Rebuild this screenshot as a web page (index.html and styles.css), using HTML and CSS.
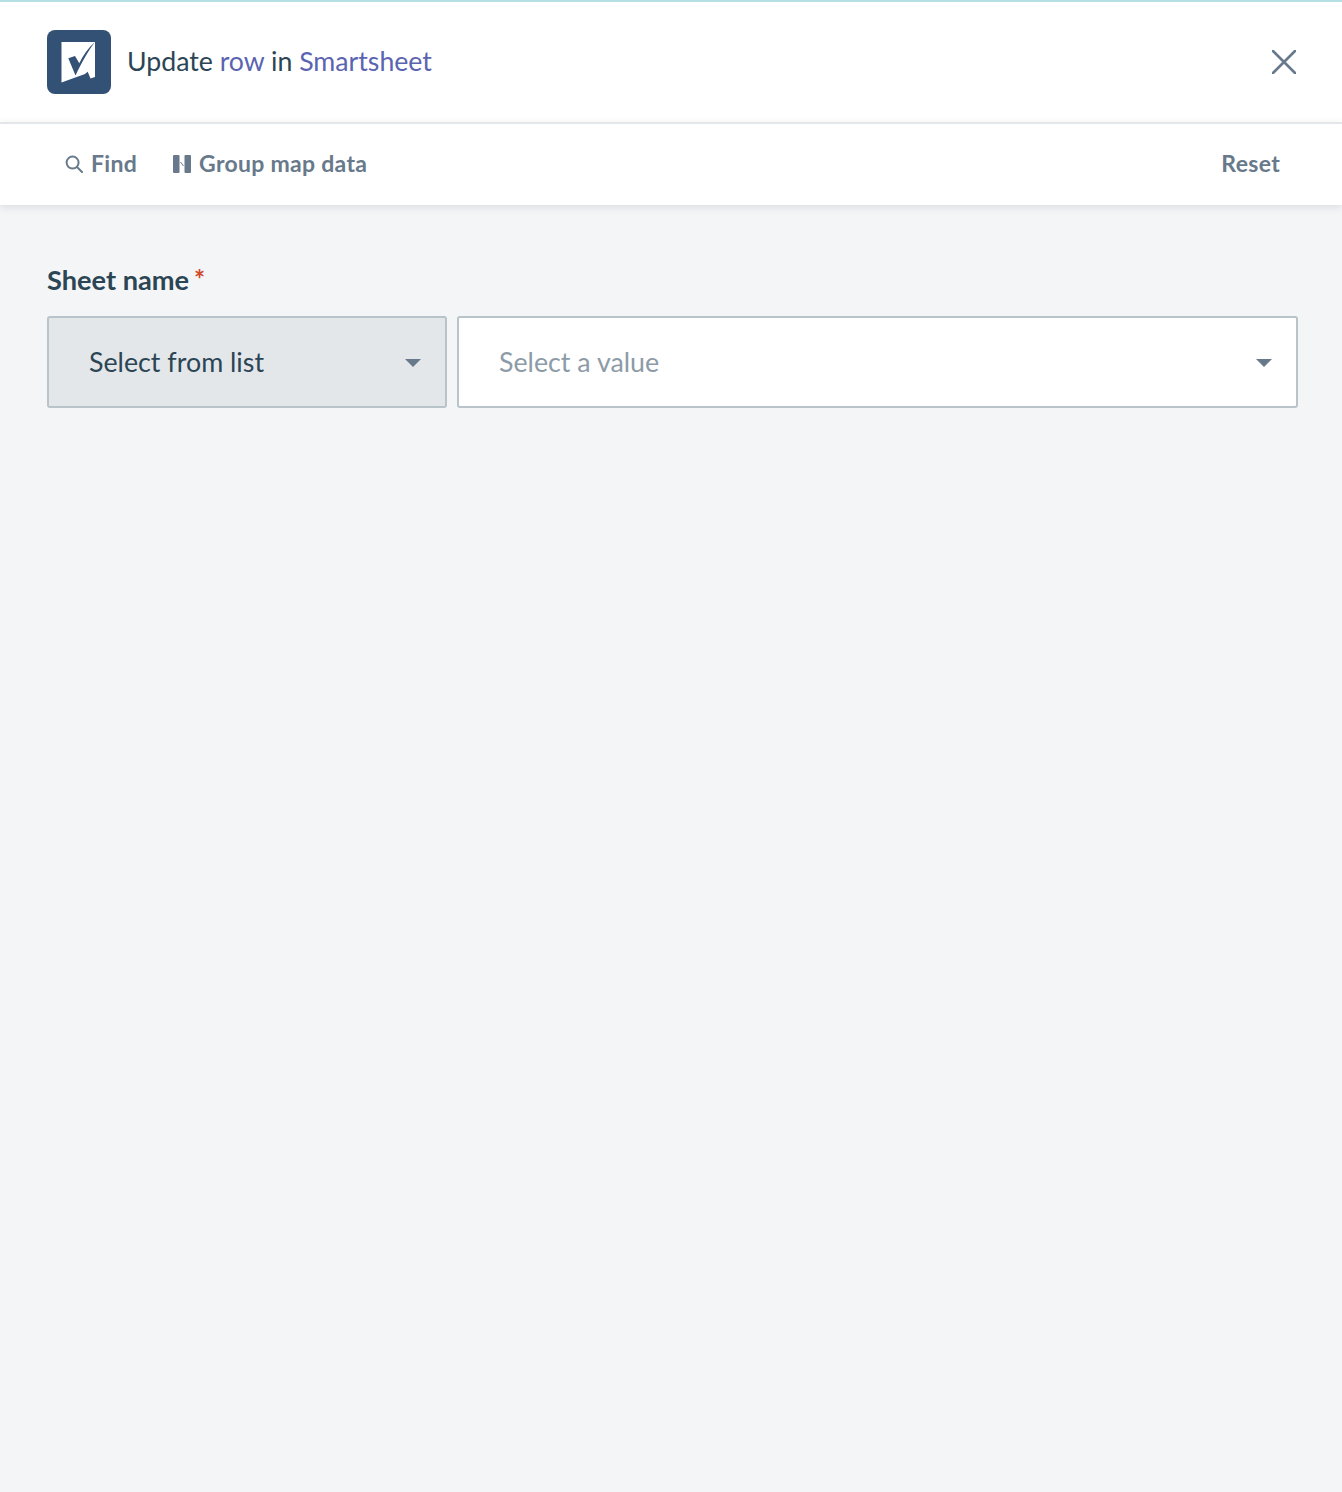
FILE: index.html

```html
<!DOCTYPE html>
<html lang="en">
<head>
  <meta charset="UTF-8">
  <meta name="viewport" content="width=device-width, initial-scale=1.0">
  <title>Update row in Smartsheet</title>
  <link rel="stylesheet" href="styles.css">
</head>
<body>
  <header class="header">
    <div class="title-group">
      <svg class="logo" viewBox="0 0 64 64" aria-hidden="true">
        <rect width="64" height="64" rx="8" fill="#335075"/>
        <path d="M14.5 12H48V47L43.5 48.5L40.7 41.7L38 44L14.5 52.5Z" fill="#fff"/>
        <path d="M21.3 28.3L28 26L32.3 33.3C36 25.5 41 18 48 12C41 21 34.5 33 28.5 45.5Z" fill="#335075"/>
      </svg>
      <h1 class="title">Update <span class="title-link">row</span> in <span class="title-link">Smartsheet</span></h1>
    </div>
    <button class="btn-close" aria-label="Close">
      <svg viewBox="0 0 24 24" width="24" height="24" aria-hidden="true">
        <path d="M1 1L23 23M23 1L1 23" stroke="#67798a" stroke-width="2.6" stroke-linecap="round" fill="none"/>
      </svg>
    </button>
  </header>

  <div class="toolbar">
    <div class="toolbar-left">
      <button class="tool-btn">
        <svg viewBox="0 0 18 18" width="18" height="18" aria-hidden="true">
          <circle cx="7.6" cy="7.6" r="6" stroke="#67798a" stroke-width="2" fill="none"/>
          <path d="M12 12L17 17" stroke="#67798a" stroke-width="2" stroke-linecap="round"/>
        </svg>
        Find
      </button>
      <button class="tool-btn">
        <svg viewBox="0 0 18 18" width="18" height="18" aria-hidden="true">
          <rect x="0" y="0" width="6.5" height="18" rx="1" fill="#67798a"/>
          <rect x="11.5" y="0" width="6.5" height="18" rx="1" fill="#67798a"/>
          <path d="M7.5 7L10.5 11" stroke="#67798a" stroke-width="1"/>
        </svg>
        Group map data
      </button>
    </div>
    <button class="tool-btn tool-reset">Reset</button>
  </div>

  <main class="content">
    <label class="field-label">Sheet name<span class="required">*</span></label>
    <div class="field-row">
      <div class="select select-mode">
        <span>Select from list</span>
        <span class="caret"></span>
      </div>
      <div class="select select-value">
        <span class="placeholder">Select a value</span>
        <span class="caret"></span>
      </div>
    </div>
  </main>
</body>
</html>
```

FILE: styles.css

```css
html, body {
  height: 100%;
}
body {
  margin: 0;
  font-family: 'Lato', 'Open Sans', sans-serif;
  background: #f3f5f7;
  color: #2c4554;
  display: flex;
  flex-direction: column;
}
button {
  font-family: inherit;
  border: none;
  background: none;
  padding: 0;
  cursor: pointer;
}
.header {
  height: 122px;
  box-sizing: border-box;
  border-top: 2px solid #b5e0e4;
  padding: 0 46px 0 47px;
  background: white;
  display: flex;
  align-items: center;
  justify-content: space-between;
}
.title-group {
  display: flex;
  align-items: center;
  gap: 16px;
}
.logo {
  width: 64px;
  height: 64px;
  display: block;
}
.title {
  margin: 0 0 3px;
  font-size: 26.7px;
  font-weight: 400;
  color: #2c4554;
}
.title-link {
  color: #5b64b0;
}
.btn-close {
  display: flex;
}
.toolbar {
  height: 77px;
  border-top: 2px solid #e3e7ea;
  padding: 0 62px 4px 65px;
  background: white;
  display: flex;
  align-items: center;
  justify-content: space-between;
  box-shadow: 0 2px 8px rgba(40,60,75,0.12);
  position: relative;
}
.toolbar-left {
  display: flex;
  align-items: center;
  gap: 36px;
}
.tool-btn {
  display: flex;
  align-items: center;
  gap: 8px;
  font-size: 23px;
  font-weight: 700;
  letter-spacing: 0.3px;
  color: #67798a;
}
.tool-btn svg {
  margin-top: 2px;
}
.content {
  flex: 1;
  padding: 60px 44px 0 47px;
}
.field-label {
  display: block;
  font-size: 27.2px;
  font-weight: 700;
  line-height: 30px;
  color: #2c4554;
  margin-bottom: 21px;
}
.required {
  color: #d0492b;
  font-size: 26px;
  margin-left: 5px;
  vertical-align: 1px;
  line-height: 0;
}
.field-row {
  display: flex;
  gap: 10px;
}
.select {
  height: 92px;
  box-sizing: border-box;
  border: 2px solid #b9c3ca;
  border-radius: 3px;
  padding: 0 24px 0 40px;
  display: flex;
  align-items: center;
  justify-content: space-between;
  font-size: 26.8px;
}
.select-mode {
  width: 400px;
  background: #e3e7ea;
}
.select-value {
  flex: 1;
  background: white;
}
.placeholder {
  color: #8c9ba7;
}
.caret {
  width: 0;
  height: 0;
  margin-top: 2px;
  border-left: 8px solid transparent;
  border-right: 8px solid transparent;
  border-top: 8px solid #67798a;
}
```
